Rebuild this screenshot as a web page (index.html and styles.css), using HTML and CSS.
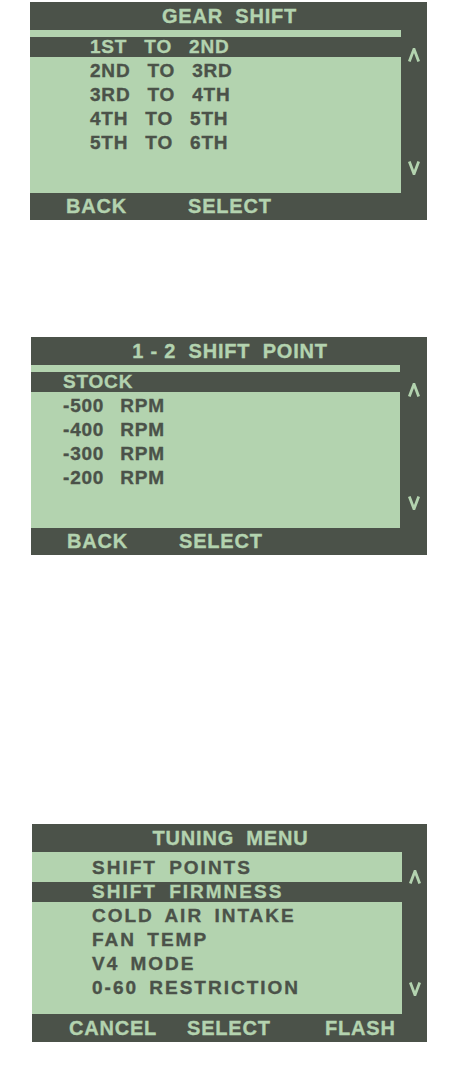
FILE: index.html
```html
<!DOCTYPE html>
<html lang="en">
<head>
<meta charset="utf-8">
<title>LCD menus</title>
<link rel="stylesheet" href="styles.css">
</head>
<body>
<div class="page">

  <section class="lcd lcd--gear">
    <div class="lcd__title">GEAR SHIFT</div>
    <div class="lcd__mid">
      <ul class="lcd__list lcd__list--gear">
        <li class="lcd__item is-selected">1ST TO 2ND</li>
        <li class="lcd__item">2ND TO 3RD</li>
        <li class="lcd__item">3RD TO 4TH</li>
        <li class="lcd__item">4TH TO 5TH</li>
        <li class="lcd__item">5TH TO 6TH</li>
      </ul>
      <div class="lcd__scroll">
        <svg class="caret" viewBox="0 0 12 14" width="12" height="14"><polyline points="1.3,13.5 6,1 10.7,13.5"/></svg>
        <svg class="caret" viewBox="0 0 12 14" width="12" height="14"><polyline points="1.3,0.5 6,13 10.7,0.5"/></svg>
      </div>
    </div>
    <div class="lcd__soft lcd__soft--two">
      <span class="lcd__key">BACK</span>
      <span class="lcd__key">SELECT</span>
    </div>
  </section>

  <section class="lcd lcd--point">
    <div class="lcd__title"><span class="lcd__tight">1 - 2</span> SHIFT POINT</div>
    <div class="lcd__mid">
      <ul class="lcd__list lcd__list--point">
        <li class="lcd__item is-selected">STOCK</li>
        <li class="lcd__item">-500 RPM</li>
        <li class="lcd__item">-400 RPM</li>
        <li class="lcd__item">-300 RPM</li>
        <li class="lcd__item">-200 RPM</li>
      </ul>
      <div class="lcd__scroll">
        <svg class="caret" viewBox="0 0 12 14" width="12" height="14"><polyline points="1.3,13.5 6,1 10.7,13.5"/></svg>
        <svg class="caret" viewBox="0 0 12 14" width="12" height="14"><polyline points="1.3,0.5 6,13 10.7,0.5"/></svg>
      </div>
    </div>
    <div class="lcd__soft lcd__soft--point">
      <span class="lcd__key">BACK</span>
      <span class="lcd__key">SELECT</span>
    </div>
  </section>

  <section class="lcd lcd--tune">
    <div class="lcd__title">TUNING MENU</div>
    <div class="lcd__mid">
      <ul class="lcd__list lcd__list--tune">
        <li class="lcd__item lcd__item--wide">SHIFT POINTS</li>
        <li class="lcd__item lcd__item--wide is-selected">SHIFT FIRMNESS</li>
        <li class="lcd__item">COLD AIR INTAKE</li>
        <li class="lcd__item">FAN TEMP</li>
        <li class="lcd__item">V4 MODE</li>
        <li class="lcd__item">0-60 RESTRICTION</li>
      </ul>
      <div class="lcd__scroll">
        <svg class="caret" viewBox="0 0 12 14" width="12" height="14"><polyline points="1.3,13.5 6,1 10.7,13.5"/></svg>
        <svg class="caret" viewBox="0 0 12 14" width="12" height="14"><polyline points="1.3,0.5 6,13 10.7,0.5"/></svg>
      </div>
    </div>
    <div class="lcd__soft lcd__soft--three">
      <span class="lcd__key">CANCEL</span>
      <span class="lcd__key">SELECT</span>
      <span class="lcd__key">FLASH</span>
    </div>
  </section>

</div>
</body>
</html>
```

FILE: styles.css
```css
* {
  box-sizing: border-box;
}

html, body {
  margin: 0;
  padding: 0;
  background: #ffffff;
}

body {
  font-family: "Liberation Sans", Arial, sans-serif;
  font-weight: 700;
  color: #4b5249;
  -webkit-text-stroke: 0.35px currentColor;
}

.page {
  display: flex;
  flex-direction: column;
  align-items: flex-start;
}

.lcd {
  background: #4b5249;
  display: flex;
  flex-direction: column;
}

.lcd--gear {
  margin: 2px 0 0 30px;
  width: 397px;
}

.lcd--point {
  margin: 117px 0 0 31px;
  width: 396px;
}

.lcd--tune {
  margin: 269px 0 0 32px;
  width: 395px;
}

.lcd__title {
  height: 28px;
  line-height: 28px;
  text-align: center;
  color: #b3d3af;
  font-size: 20px;
  letter-spacing: 0.8px;
  word-spacing: 6px;
  padding-left: 2px;
}

.lcd__tight {
  word-spacing: 0;
}

.lcd__mid {
  display: flex;
  height: 163px;
}

.lcd--tune .lcd__mid {
  height: 162px;
}

.lcd__list {
  list-style: none;
  margin: 0;
  width: 371px;
  background: #b3d3af;
  padding: 7px 0 0 0;
  display: flex;
  flex-direction: column;
  gap: 4px;
}

.lcd--point .lcd__list {
  width: 369px;
}

.lcd--tune .lcd__list {
  width: 370px;
  padding-top: 6px;
}

.lcd__item {
  height: 20px;
  line-height: 20px;
  font-size: 19px;
  letter-spacing: 0.8px;
  white-space: nowrap;
}

.lcd__list--gear .lcd__item {
  padding-left: 60px;
  word-spacing: 11px;
}

.lcd__list--point .lcd__item {
  padding-left: 32px;
  word-spacing: 10px;
}

.lcd__list--tune .lcd__item {
  padding-left: 60px;
  word-spacing: 4px;
  letter-spacing: 2px;
}

.lcd__list--tune .lcd__item--wide {
  word-spacing: 5px;
}

.lcd__item.is-selected {
  background: #4b5249;
  color: #b3d3af;
}

.lcd__scroll {
  flex: 1;
  display: flex;
  flex-direction: column;
  align-items: center;
  justify-content: space-between;
  padding: 18px 0 18px 0;
}

.caret {
  display: block;
  fill: none;
  stroke: #b3d3af;
  stroke-width: 2.8;
  stroke-linejoin: miter;
}

.lcd__soft {
  height: 27px;
  display: grid;
  align-items: center;
  color: #b3d3af;
  font-size: 20px;
  letter-spacing: 0.8px;
  padding-left: 36px;
}

.lcd--tune .lcd__soft {
  height: 28px;
  padding-left: 37px;
}

.lcd__soft--two {
  grid-template-columns: 122px 1fr;
}

.lcd__soft--point {
  grid-template-columns: 112px 1fr;
}

.lcd__soft--three {
  grid-template-columns: 118px 138px 1fr;
}

.lcd__key {
  line-height: 27px;
}
```
